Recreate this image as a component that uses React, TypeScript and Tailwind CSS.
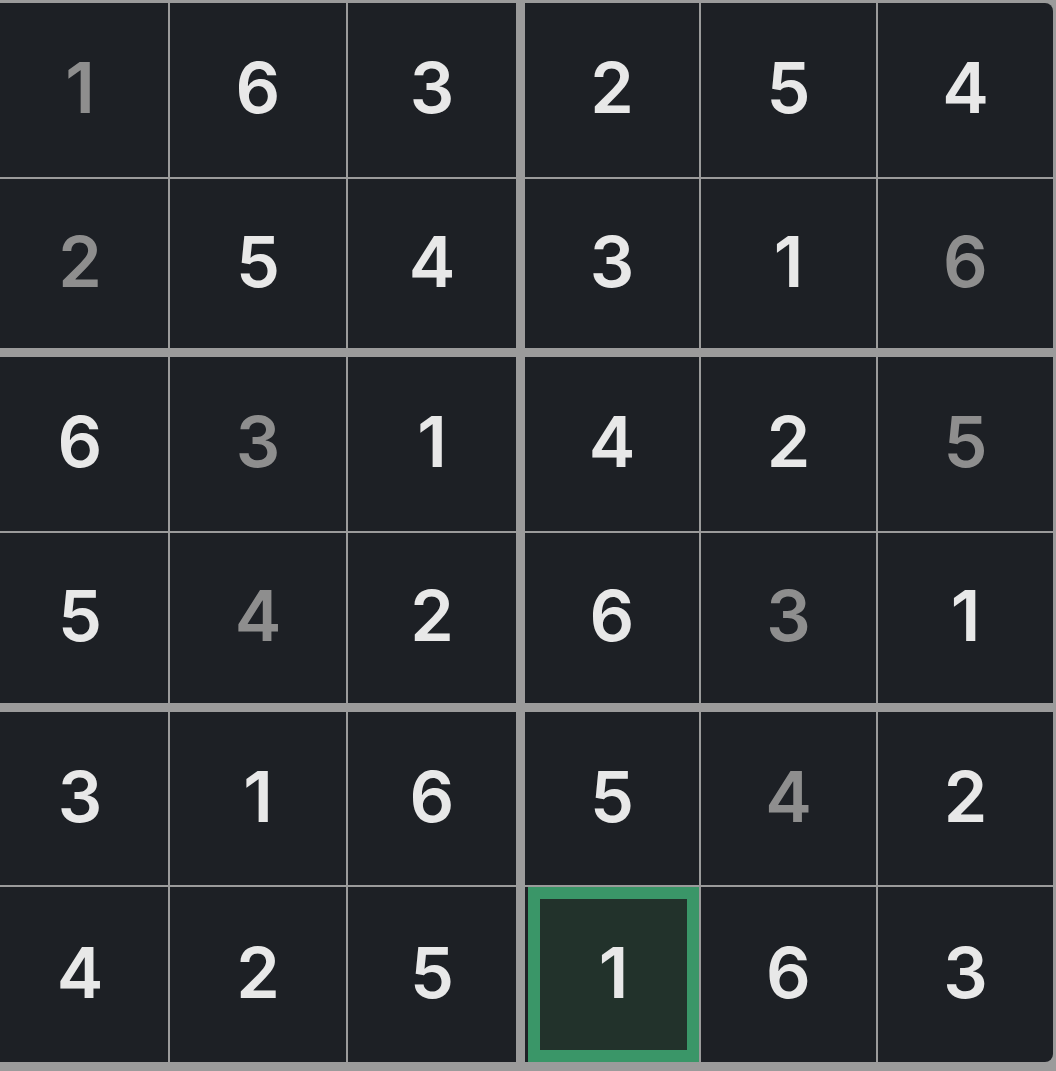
const grid = [
  [1, 6, 3, 2, 5, 4],
  [2, 5, 4, 3, 1, 6],
  [6, 3, 1, 4, 2, 5],
  [5, 4, 2, 6, 3, 1],
  [3, 1, 6, 5, 4, 2],
  [4, 2, 5, 1, 6, 3],
];

// cells shown in the muted colour
const given = new Set(["0-0", "1-0", "1-5", "2-1", "2-5", "3-1", "3-4", "4-4"]);
const selected = "5-3";

const boxCols = ["grid-cols-[176px_176px_168px]", "grid-cols-[174px_175px_175px]"];
const boxRows = ["grid-rows-[174px_169px]", "grid-rows-[174px_170px]", "grid-rows-[173px_175px]"];

function Cell({ r, c }: { r: number; c: number }) {
  const key = `${r}-${c}`;
  const muted = given.has(key);
  let corner = "";
  if (r === 0 && c === 5) corner = "rounded-tr-[8px]";
  if (r === 5 && c === 5) corner = "rounded-br-[8px]";

  if (key === selected) {
    return (
      <div className="bg-[#1d2025] flex">
        <div className="ml-[3px] flex-1 border-[12px] border-[#3a9668] bg-[#22322b] flex items-center justify-center pb-[5px] text-[70px] font-semibold text-[#e8e8e8]">
          {grid[r][c]}
        </div>
      </div>
    );
  }

  return (
    <div
      className={`bg-[#1d2025] flex items-center justify-center pb-[5px] text-[70px] font-semibold ${corner} ${
        muted ? "text-[#8e8e8e]" : "text-[#e8e8e8]"
      }`}
    >
      {grid[r][c]}
    </div>
  );
}

export default function App() {
  return (
    <div
      className="w-[1056px] h-[1071px] bg-[#9b9b9b] pt-[3px] pr-[3px] pb-[9px] overflow-hidden"
      style={{ fontFamily: "Inter, 'Noto Sans', sans-serif" }}
    >
      <div className="grid grid-cols-[524px_528px] grid-rows-[345px_346px_350px] gap-[9px] h-full -ml-[8px]">
        {[0, 1, 2].map((br) =>
          [0, 1].map((bc) => (
            <div key={`${br}-${bc}`} className={`grid ${boxCols[bc]} ${boxRows[br]} gap-[2px]`}>
              {[0, 1].map((ir) =>
                [0, 1, 2].map((ic) => (
                  <Cell key={`${ir}-${ic}`} r={br * 2 + ir} c={bc * 3 + ic} />
                ))
              )}
            </div>
          ))
        )}
      </div>
    </div>
  );
}
